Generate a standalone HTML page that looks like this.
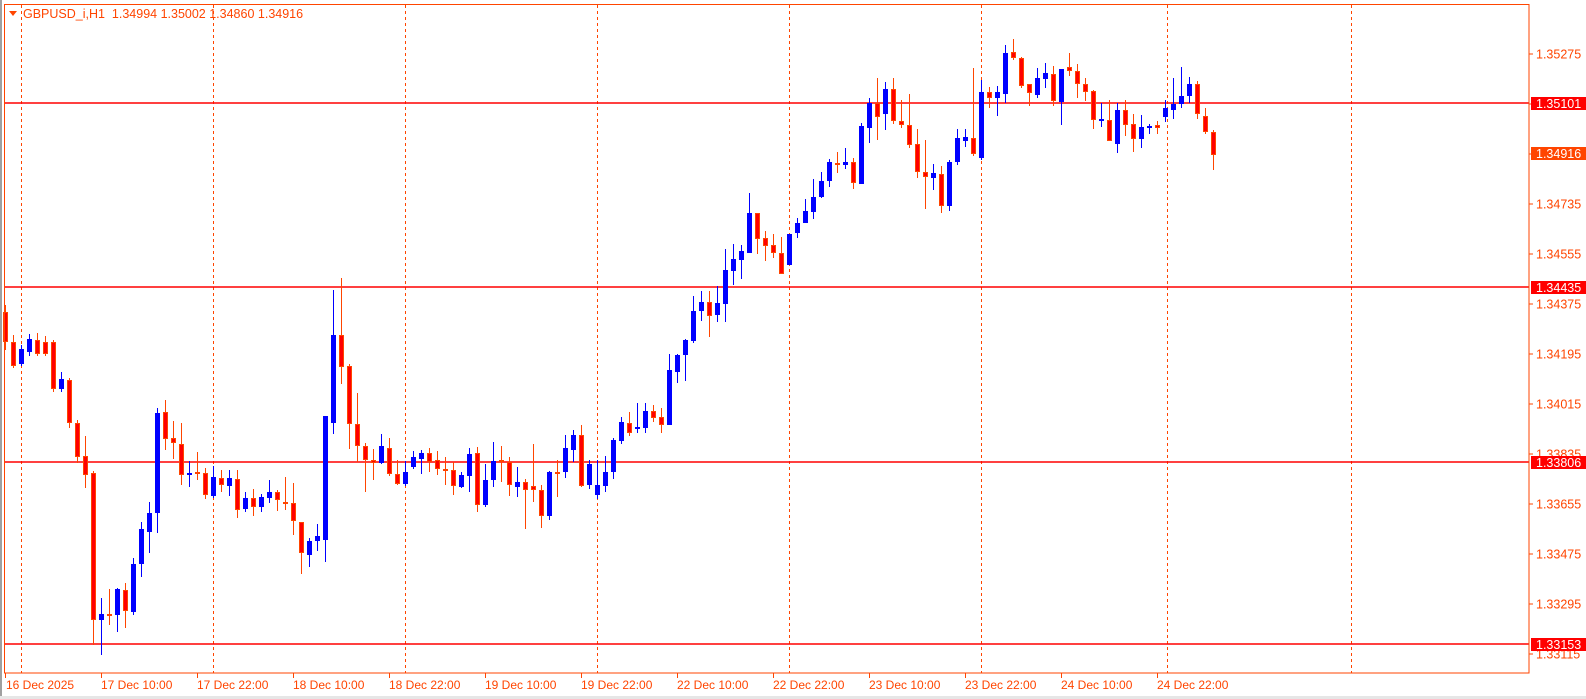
<!DOCTYPE html>
<html><head><meta charset="utf-8"><style>
html,body{margin:0;padding:0;background:#fff;width:1586px;height:699px;overflow:hidden}
svg{display:block}
text{font-family:"Liberation Sans","DejaVu Sans",sans-serif}
</style></head><body>
<svg id="s" width="1586" height="699" xmlns="http://www.w3.org/2000/svg">
<rect x="0" y="0" width="1586" height="699" fill="#fff"/>
<rect x="0" y="0" width="2" height="699" fill="#a0a0a0"/>
<rect x="0" y="696" width="1586" height="3" fill="#e6e6e6"/>
<g stroke="#ff4500" stroke-width="1" stroke-dasharray="3,3">
<line x1="21.5" y1="5" x2="21.5" y2="673"/>
<line x1="213.5" y1="5" x2="213.5" y2="673"/>
<line x1="405.5" y1="5" x2="405.5" y2="673"/>
<line x1="597.5" y1="5" x2="597.5" y2="673"/>
<line x1="789.5" y1="5" x2="789.5" y2="673"/>
<line x1="981.5" y1="5" x2="981.5" y2="673"/>
<line x1="1167.5" y1="5" x2="1167.5" y2="673"/>
<line x1="1351.5" y1="5" x2="1351.5" y2="673"/>
</g>
<g stroke="#ff0000" stroke-width="1.5">
<line x1="5" y1="103" x2="1529" y2="103"/>
<line x1="5" y1="287" x2="1529" y2="287"/>
<line x1="5" y1="462" x2="1529" y2="462"/>
<line x1="5" y1="644" x2="1529" y2="644"/>
</g>
<g id="c"></g>
<rect x="4.5" y="4.5" width="1524.5" height="668.5" fill="none" stroke="#ff4500" stroke-width="1"/>
<g stroke="#ff4500">
<line x1="1529" y1="54" x2="1533" y2="54"/><line x1="1529" y1="104" x2="1533" y2="104"/><line x1="1529" y1="154" x2="1533" y2="154"/><line x1="1529" y1="204" x2="1533" y2="204"/><line x1="1529" y1="254" x2="1533" y2="254"/><line x1="1529" y1="304" x2="1533" y2="304"/><line x1="1529" y1="354" x2="1533" y2="354"/><line x1="1529" y1="404" x2="1533" y2="404"/><line x1="1529" y1="454" x2="1533" y2="454"/><line x1="1529" y1="504" x2="1533" y2="504"/><line x1="1529" y1="554" x2="1533" y2="554"/><line x1="1529" y1="604" x2="1533" y2="604"/><line x1="1529" y1="654" x2="1533" y2="654"/>
<line x1="5.5" y1="673" x2="5.5" y2="678"/><line x1="101.5" y1="673" x2="101.5" y2="678"/><line x1="197.5" y1="673" x2="197.5" y2="678"/><line x1="293.5" y1="673" x2="293.5" y2="678"/><line x1="389.5" y1="673" x2="389.5" y2="678"/><line x1="485.5" y1="673" x2="485.5" y2="678"/><line x1="581.5" y1="673" x2="581.5" y2="678"/><line x1="677.5" y1="673" x2="677.5" y2="678"/><line x1="773.5" y1="673" x2="773.5" y2="678"/><line x1="869.5" y1="673" x2="869.5" y2="678"/><line x1="965.5" y1="673" x2="965.5" y2="678"/><line x1="1061.5" y1="673" x2="1061.5" y2="678"/><line x1="1157.5" y1="673" x2="1157.5" y2="678"/>
</g>
<g fill="#ff4500" font-size="12.5">
<text x="1536" y="58.5">1.35275</text>
<text x="1536" y="208.5">1.34735</text>
<text x="1536" y="258.5">1.34555</text>
<text x="1536" y="308.5">1.34375</text>
<text x="1536" y="358.5">1.34195</text>
<text x="1536" y="408.5">1.34015</text>
<text x="1536" y="458.5">1.33835</text>
<text x="1536" y="508.5">1.33655</text>
<text x="1536" y="558.5">1.33475</text>
<text x="1536" y="608.5">1.33295</text>
<text x="1536" y="658.5">1.33115</text>
</g>
<rect x="1531" y="97" width="55" height="13" fill="#ff0000"/>
<rect x="1531" y="147" width="55" height="13" fill="#ff4500"/>
<rect x="1531" y="281" width="55" height="13" fill="#ff0000"/>
<rect x="1531" y="456" width="55" height="13" fill="#ff0000"/>
<rect x="1531" y="638" width="55" height="13" fill="#ff0000"/>
<g fill="#fff" font-size="12.5">
<text x="1536" y="108">1.35101</text>
<text x="1536" y="158">1.34916</text>
<text x="1536" y="292">1.34435</text>
<text x="1536" y="467">1.33806</text>
<text x="1536" y="649">1.33153</text>
</g>
<g fill="#ff4500" font-size="12">
<text x="6" y="689">16 Dec 2025</text>
<text x="101" y="689">17 Dec 10:00</text>
<text x="197" y="689">17 Dec 22:00</text>
<text x="293" y="689">18 Dec 10:00</text>
<text x="389" y="689">18 Dec 22:00</text>
<text x="485" y="689">19 Dec 10:00</text>
<text x="581" y="689">19 Dec 22:00</text>
<text x="677" y="689">22 Dec 10:00</text>
<text x="773" y="689">22 Dec 22:00</text>
<text x="869" y="689">23 Dec 10:00</text>
<text x="965" y="689">23 Dec 22:00</text>
<text x="1061" y="689">24 Dec 10:00</text>
<text x="1157" y="689">24 Dec 22:00</text>
</g>
<polygon points="9,11 17,11 13,16" fill="#ff4500"/>
<text x="23" y="18" fill="#ff4500" font-size="12.5" xml:space="preserve">GBPUSD_i,H1  1.34994 1.35002 1.34860 1.34916</text>
</svg>
<script>
var d=`5 r 312 342 305 350
13 r 342 366 335 368
21 b 349 364 345 366
29 b 339 352 334 356
37 r 340 354 333 356
45 r 342 354 336 356
53 r 342 389 340 392
61 b 379 389 372 392
69 r 380 423 378 428
77 r 423 457 420 463
85 r 456 475 436 488
93 r 473 620 471 645
101 b 614 620 598 655
109 r 614 616 589 625
117 b 589 615 588 632
125 r 590 611 583 628
133 b 564 612 558 615
141 b 529 564 522 577
149 b 513 532 502 553
157 b 413 513 408 533
165 r 412 439 400 450
173 r 438 443 421 459
181 r 444 475 423 485
189 b 473 475 461 487
197 r 472 474 452 480
205 r 473 495 468 499
213 b 477 496 466 498
221 r 478 485 470 492
229 b 478 486 470 496
237 r 479 510 470 518
245 b 498 509 492 512
253 r 498 507 489 516
261 b 497 507 494 512
269 b 492 498 480 503
277 r 492 500 490 511
285 r 502 504 477 510
293 r 503 521 483 535
301 r 522 553 522 574
309 b 541 555 538 567
317 b 536 541 524 551
325 b 416 540 417 562
333 b 335 423 290 434
341 r 335 367 278 384
349 r 366 424 364 449
357 r 424 446 393 462
365 r 446 460 443 492
373 r 460 463 449 480
381 b 446 463 434 464
389 r 448 474 438 476
397 r 474 484 460 485
405 b 472 484 461 486
413 b 457 467 451 469
421 b 453 459 450 474
429 r 453 462 448 472
437 r 460 469 451 475
445 r 469 471 457 485
453 r 470 486 462 495
461 b 475 487 472 488
469 b 454 476 448 492
477 r 453 505 447 512
485 b 480 505 464 507
493 b 461 480 442 487
501 r 460 462 446 482
509 r 462 485 457 496
517 b 482 487 467 497
525 r 482 490 479 529
533 r 486 490 444 502
541 r 490 516 485 528
549 b 472 516 471 520
557 r 472 474 460 497
565 b 448 472 435 478
573 b 435 450 430 462
581 r 435 486 425 487
589 b 464 485 460 489
597 b 485 495 460 499
605 b 472 486 456 492
613 b 440 472 438 479
621 b 422 441 417 444
629 r 423 433 412 436
637 b 427 429 403 433
645 b 411 428 403 433
653 r 411 418 405 422
661 r 417 425 408 433
669 b 370 425 354 425
677 b 355 372 354 383
685 b 340 355 339 381
693 b 311 341 296 343
701 b 302 311 291 321
709 r 302 316 291 337
717 b 303 315 286 322
725 b 270 304 249 322
733 b 259 271 244 285
741 b 251 260 245 279
749 b 213 253 193 253
757 r 213 239 213 254
765 r 238 246 231 261
773 r 245 253 234 258
781 r 253 274 237 274
789 b 234 265 234 265
797 b 223 233 218 238
805 b 211 223 199 223
813 b 197 212 179 219
821 b 181 197 172 198
829 b 162 181 159 187
837 r 163 165 152 173
845 b 162 165 148 169
853 r 162 183 158 189
861 b 126 184 123 184
869 b 103 128 98 143
877 r 103 117 78 140
885 b 89 114 82 130
893 r 89 121 78 124
901 r 121 125 100 128
909 r 125 145 94 148
917 r 144 172 129 178
925 r 172 177 140 209
933 b 173 178 164 190
941 r 174 206 166 213
949 b 162 206 160 211
957 b 138 162 129 165
965 b 137 141 129 147
973 r 138 154 68 156
981 b 92 158 80 160
989 r 92 98 87 108
997 b 92 98 86 116
1005 b 53 94 45 103
1013 r 52 58 39 60
1021 r 58 86 57 88
1029 r 84 93 84 106
1037 b 78 95 68 98
1045 b 73 79 63 88
1053 r 74 101 66 106
1061 b 69 102 69 125
1069 r 67 71 53 76
1077 r 71 84 64 98
1085 r 84 92 78 101
1093 r 91 120 90 129
1101 b 119 121 103 127
1109 r 120 141 100 141
1117 b 110 144 103 153
1125 r 110 125 100 136
1133 r 124 139 114 152
1141 b 127 139 115 148
1149 b 126 128 124 134
1157 r 125 128 121 134
1165 b 108 117 100 122
1173 b 104 110 78 119
1181 b 96 104 67 108
1189 b 84 96 77 103
1197 r 84 114 81 119
1205 r 116 132 108 134
1213 r 132 155 130 170`;
var g=document.getElementById('c'),h='';
d.trim().split('\n').forEach(function(l){var p=l.trim().split(/\s+/);var x=+p[0],t=+p[2],b=+p[3],hi=+p[4],lo=+p[5];
if(p[1]=='b'){h+='<line x1="'+(x+0.5)+'" y1="'+hi+'" x2="'+(x+0.5)+'" y2="'+lo+'" stroke="#0000ff"/>';h+='<rect x="'+(x-2)+'" y="'+t+'" width="5" height="'+Math.max(b-t,1)+'" fill="#0000ff"/>';}
else{h+='<line x1="'+(x+0.5)+'" y1="'+hi+'" x2="'+(x+0.5)+'" y2="'+lo+'" stroke="#ff4500"/>';h+='<rect x="'+(x-1.5)+'" y="'+(t+0.5)+'" width="4" height="'+Math.max(b-t-1,1)+'" fill="#ff0000" stroke="#ff4500" stroke-width="1"/>';}
});
g.innerHTML=h;
</script>
</body></html>
